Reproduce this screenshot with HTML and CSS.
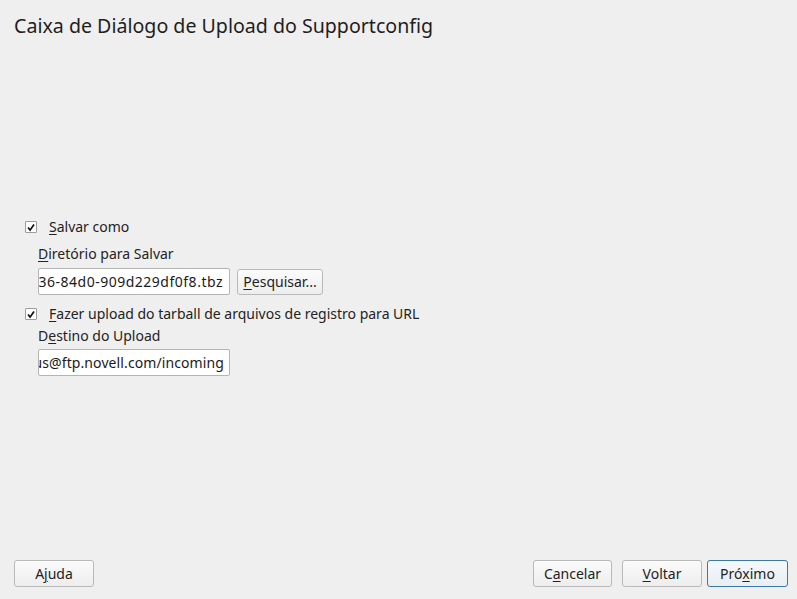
FILE: index.html
```html
<!DOCTYPE html>
<html lang="pt">
<head>
<meta charset="utf-8">
<title>Supportconfig</title>
<link rel="stylesheet" href="styles.css">
</head>
<body>
<div class="page">
  <h1 class="title">Caixa de Diálogo de Upload do Supportconfig</h1>
  <main class="content">
    <div class="form">
      <div class="check-row">
        <span class="box"><svg viewBox="0 0 11 11" width="11" height="11"><path d="M2.3 5.5 L4.5 8.4 L8.8 2.2" fill="none" stroke="#111" stroke-width="1.9"/></svg></span>
        <span class="check-label"><u>S</u>alvar como</span>
      </div>
      <div class="sub sub-first">
        <div class="field-label"><u>D</u>iretório para Salvar</div>
        <div class="input-row">
          <div class="input wide-text"><span>/var/log/scc_linux_240112_1015_5a2c1e36-84d0-909d229df0f8.tbz</span></div>
          <button class="btn small"><u>P</u>esquisar...</button>
        </div>
      </div>
      <div class="check-row second">
        <span class="box"><svg viewBox="0 0 11 11" width="11" height="11"><path d="M2.3 5.5 L4.5 8.4 L8.8 2.2" fill="none" stroke="#111" stroke-width="1.9"/></svg></span>
        <span class="check-label"><u>F</u>azer upload do tarball de arquivos de registro para URL</span>
      </div>
      <div class="sub sub-second">
        <div class="field-label">D<u>e</u>stino do Upload</div>
        <div class="input-row">
          <div class="input url"><span>ftp://anonymous:yast-us@ftp.novell.com/incoming</span></div>
        </div>
      </div>
    </div>
  </main>
  <footer class="footer">
    <button class="btn wide">A<u>j</u>uda</button>
    <div class="right">
      <button class="btn wide cancel">C<u>a</u>ncelar</button>
      <button class="btn wide back"><u>V</u>oltar</button>
      <button class="btn wide primary">Pró<u>x</u>imo</button>
    </div>
  </footer>
</div>
</body>
</html>
```
FILE: styles.css
```css
* { box-sizing: border-box; }
html, body { margin: 0; padding: 0; }
body {
  background: #efefef;
  font-family: "Noto Sans", "DejaVu Sans", sans-serif;
  font-size: 14px;
  color: #232323;
}
.page {
  width: 797px;
  height: 599px;
  display: flex;
  flex-direction: column;
}
.title {
  margin: 0;
  padding: 12px 0 0 14px;
  font-size: 19.6px;
  font-weight: 400;
  line-height: 28px;
  color: #1e1e1e;
}
.content {
  flex: 1;
  padding: 177px 0 0 25px;
}
u { text-decoration: underline; text-underline-offset: 2px; text-decoration-thickness: 1px; }
.check-row {
  display: flex;
  align-items: center;
  height: 20px;
}
.check-row.second { margin-top: 9px; }
.box {
  width: 12px;
  height: 12px;
  border: 1px solid #9c9c9c;
  background: #fff;
  border-radius: 1px;
  display: flex;
  align-items: center;
  justify-content: center;
}
.box svg { display: block; }
.check-label { margin-left: 12px; line-height: 20px; }
.sub { padding-left: 13px; }
.sub-first { margin-top: 7px; }
.sub-second { margin-top: 2px; }
.field-label { line-height: 20px; }
.input-row {
  display: flex;
  align-items: center;
  gap: 7px;
  margin-top: 4px;
}
.sub-second .input-row { margin-top: 3px; }
.input {
  width: 192px;
  height: 27px;
  background: #fff;
  border: 1px solid #b4b4b4;
  border-radius: 2px;
  display: flex;
  align-items: center;
  justify-content: flex-end;
  overflow: hidden;
  white-space: nowrap;
  padding-right: 4px;
  color: #1a1a1a;
}
.input span { flex: none; }
.input.wide-text { letter-spacing: 0.5px; padding-right: 6px; }
.input.url { padding-right: 5px; letter-spacing: 0.1px; }
.btn {
  font-family: inherit;
  font-size: 14px;
  color: #232323;
  background: linear-gradient(#fbfbfb, #ededed);
  border: 1px solid #b9b9b9;
  border-radius: 3px;
  height: 27px;
  padding: 0;
  line-height: 24px;
}
.btn.small { width: 86px; height: 26px; margin-top: 1px; }
.btn.wide { width: 80px; }
.btn.cancel { width: 79px; }
.footer {
  display: flex;
  justify-content: space-between;
  align-items: center;
  padding: 0 9px 12px 14px;
}
.right { display: flex; gap: 5px; }
.right .back { margin-left: 5px; }
.btn.primary {
  border-color: #3d76a8;
  background: linear-gradient(#f5f8fb, #e9eef3);
  width: 81px;
}
```
